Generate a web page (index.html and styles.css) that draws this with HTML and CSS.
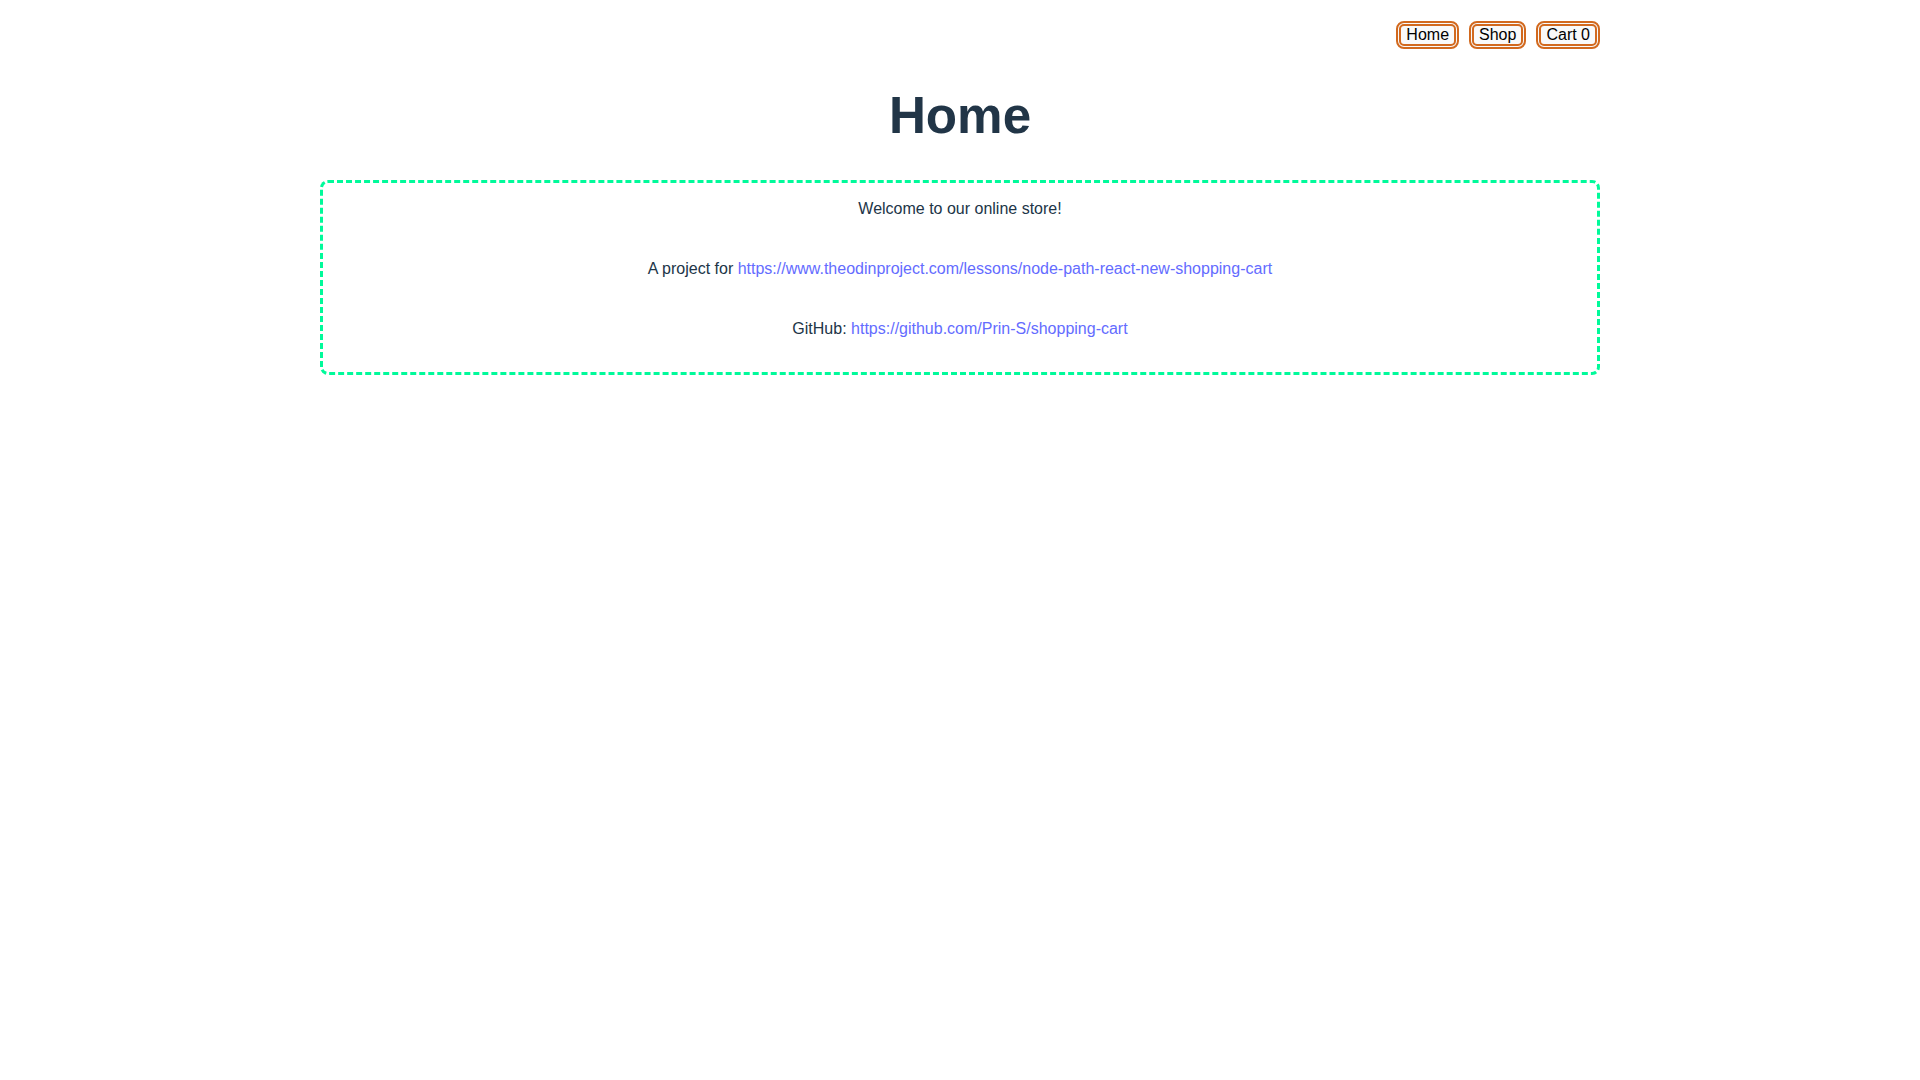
FILE: index.html
```html
<!DOCTYPE html>
<html lang="en">
<head>
<meta charset="UTF-8">
<title>Shopping Cart</title>
<link rel="stylesheet" href="styles.css">
</head>
<body>
<div class="app">
  <header class="nav">
    <button class="nav-btn">Home</button>
    <button class="nav-btn">Shop</button>
    <button class="nav-btn">Cart 0</button>
  </header>
  <h1 class="title">Home</h1>
  <section class="panel">
    <p class="line">Welcome to our online store!</p>
    <p class="line">A project for <a class="link" href="#">https://www.theodinproject.com/lessons/node-path-react-new-shopping-cart</a></p>
    <p class="line">GitHub: <a class="link" href="#">https://github.com/Prin-S/shopping-cart</a></p>
  </section>
</div>
</body>
</html>
```
FILE: styles.css
```css
html, body {
  margin: 0;
  padding: 0;
  background: #ffffff;
}

body {
  font-family: "Liberation Sans", Arial, sans-serif;
  font-size: 16px;
  color: #213547;
  line-height: 1.5;
}

.app {
  width: 1280px;
  margin: 0 auto;
  text-align: center;
}

.nav {
  display: flex;
  justify-content: flex-end;
  gap: 10px;
  padding: 21px 0 5px;
}

.nav-btn {
  font-family: "Liberation Sans", Arial, sans-serif;
  font-size: 16px;
  line-height: 18px;
  color: #000000;
  background: #f9f9f9;
  border: 5px double #d2691e;
  border-radius: 8px;
  padding: 0 5px;
  margin: 0;
  cursor: pointer;
}

.title {
  font-size: 51.2px;
  line-height: 1.1;
  font-weight: 700;
  color: #213547;
  margin: 34px 0 36px;
}

.panel {
  border: 3px dashed #00fa9a;
  border-radius: 8px;
  padding: 14px 0 31px;
  display: flex;
  flex-direction: column;
  gap: 36px;
}

.line {
  margin: 0;
  line-height: 24px;
}

.link {
  color: #646cff;
  text-decoration: none;
}
```
